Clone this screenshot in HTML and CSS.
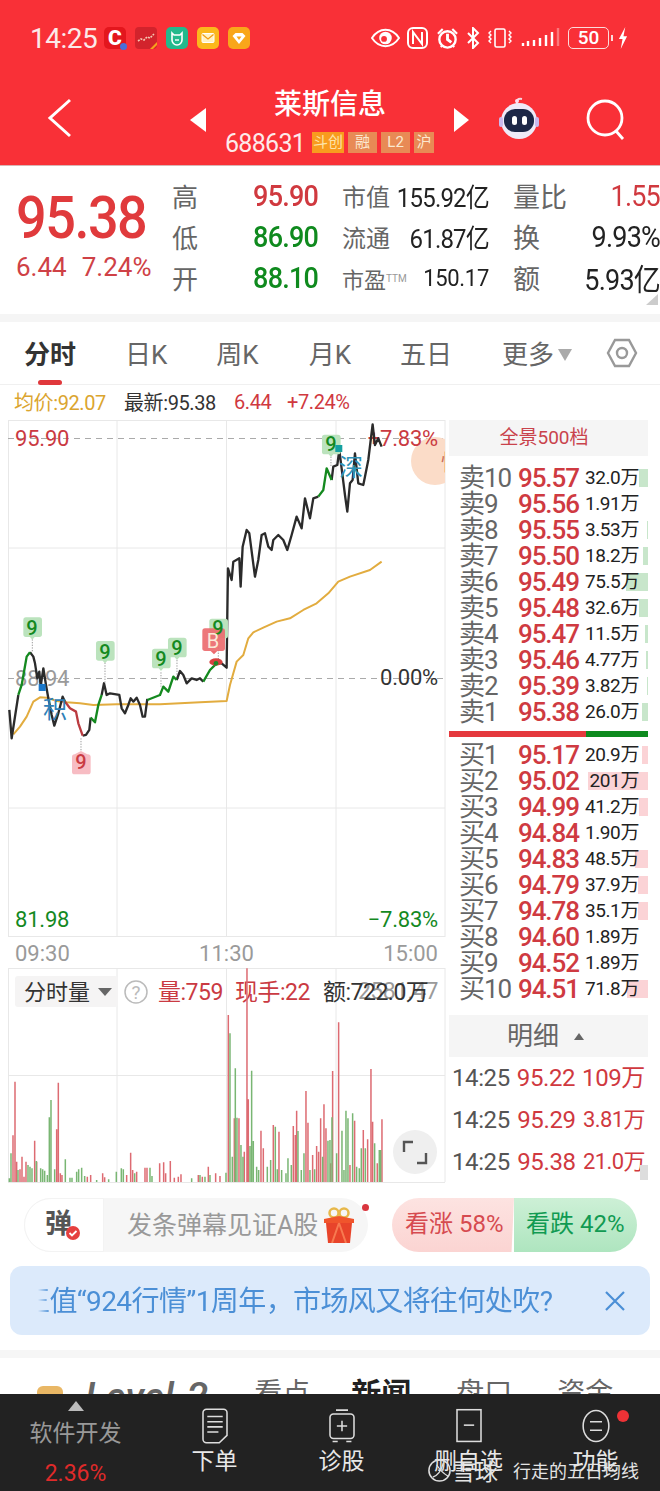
FILE: index.html
```html
<!DOCTYPE html>
<html lang="zh-CN">
<head>
    <meta charset="UTF-8">
    <meta name="viewport" content="width=device-width, initial-scale=1.0">
    <title>莱斯信息 688631</title>
    <link rel="stylesheet" href="styles.css">
</head>
<body>
<div class="page">

    <!-- red header -->
    <header class="top">
        <div class="status-bar">
            <span class="clock">14:25</span>
            <div class="app-icons">
                <span class="app app-c">C</span>
                <svg class="app" viewBox="0 0 22 22"><rect width="22" height="22" rx="4" fill="#d2232c"/><path d="M3 14l3-2 3 1 3-3 3 1 4-4" fill="none" stroke="#f6c6b0" stroke-width="1.6" stroke-dasharray="2 1"/><path d="M15 22l7-7v3l-4 4z" fill="#f7a21c"/></svg>
                <svg class="app" viewBox="0 0 22 22"><rect width="22" height="22" rx="5" fill="#23b98c"/><path d="M6 6l2 2h6l2-2v7a5 5 0 0 1-10 0z" fill="none" stroke="#fff" stroke-width="1.6"/><path d="M9 13h4" stroke="#fff" stroke-width="1.4"/></svg>
                <svg class="app" viewBox="0 0 22 22"><rect width="22" height="22" rx="5" fill="#fbb81c"/><rect x="5" y="6.500" width="12" height="9" rx="1" fill="#fff3c4" stroke="#fff" stroke-width="1"/><path d="M5.500 7.500L11 12l5.500-4.500" fill="none" stroke="#f39b12" stroke-width="1.200"/></svg>
                <svg class="app" viewBox="0 0 22 22"><rect width="22" height="22" rx="5" fill="#f9a61a"/><path d="M4.500 9l3-3h7l3 3-6.500 8z" fill="#fff"/><path d="M8.500 9.500h5L11 13z" fill="#f9a61a"/></svg>
            </div>
            <div class="sys-icons">
                <svg class="eye" viewBox="0 0 30 20"><path d="M1 10c4-6 8-8.500 14-8.500S25 4 29 10c-4 6-8 8.500-14 8.500S5 16 1 10z" fill="none" stroke="#fff" stroke-width="2"/><circle cx="15" cy="10" r="6.500" fill="#fff"/><circle cx="13.500" cy="11" r="3" fill="#f93037"/></svg>
                <svg class="nfc" viewBox="0 0 21 22"><rect x="1" y="1" width="19" height="20" rx="5" fill="none" stroke="#fff" stroke-width="2"/><path d="M6 17V5l9 12V5" fill="none" stroke="#fff" stroke-width="2"/></svg>
                <svg class="alarm" viewBox="0 0 24 24"><circle cx="12" cy="13" r="8.500" fill="none" stroke="#fff" stroke-width="2.500"/><path d="M12 7v6l4 3" fill="none" stroke="#fff" stroke-width="3"/><path d="M2 7l5-5M22 7l-5-5M5 21l2-2M19 21l-2-2" stroke="#fff" stroke-width="2.200"/></svg>
                <svg class="bt" viewBox="0 0 14 22"><path d="M2 6l10 10-5 5V1l5 5L2 16" fill="none" stroke="#fff" stroke-width="2"/></svg>
                <svg class="vibe" viewBox="0 0 26 20"><rect x="8" y="1" width="10" height="18" rx="1.500" fill="none" stroke="#fff" stroke-width="1.600"/><path d="M4 3l-2 2 2 2-2 2 2 2-2 2 2 2M22 3l2 2-2 2 2 2-2 2 2 2-2 2" fill="none" stroke="#fff" stroke-width="1.400"/></svg>
                <svg class="signal" viewBox="0 0 40 22"><path d="M2 16v3M7 14v5M13 13v6M19 11v8M25 8v11M31 5v14" stroke="#fff" stroke-width="2.400"/><path d="M37 1v18" stroke="#fff" stroke-opacity=".35" stroke-width="2.400"/></svg>
                <span class="battery">50</span>
                <span class="battery-tip"></span>
                <svg class="bolt" viewBox="0 0 11 24"><path d="M8 0L1 13h4l-2 11 7-14H6z" fill="#fff"/></svg>
            </div>
        </div>
        <div class="nav-bar">
            <svg class="back" viewBox="0 0 26 40"><path d="M23 2L3 20l20 18" fill="none" stroke="#fff" stroke-width="3"/></svg>
            <span class="arrow-left"></span>
            <div class="stock-title">
                <div class="stock-name">莱斯信息</div>
                <div class="stock-code">688631
                    <span class="mark mark-orange">斗创</span><span class="mark mark-wide">融</span><span class="mark mark-wide">L2</span><span class="mark">沪</span>
                </div>
            </div>
            <span class="arrow-right"></span>
            <svg class="robot" viewBox="0 0 46 44"><path d="M21 8c-1-4 1-6 5-5" fill="none" stroke="#f5d8e0" stroke-width="2"/><circle cx="21" cy="5" r="2" fill="#fde"/><circle cx="23" cy="25" r="18" fill="#efeaf8"/><rect x="3" y="21" width="4" height="10" rx="2" fill="#c9b9ee"/><rect x="39" y="21" width="4" height="10" rx="2" fill="#c9b9ee"/><rect x="8" y="13" width="30" height="23" rx="11" fill="#1c2747"/><rect x="16" y="20" width="5" height="9" rx="2.500" fill="#fff"/><rect x="26" y="20" width="5" height="9" rx="2.500" fill="#fff"/></svg>
            <svg class="search" viewBox="0 0 40 42"><circle cx="19" cy="19" r="17" fill="none" stroke="#fff" stroke-width="2.800"/><path d="M30 32l7 8" stroke="#fff" stroke-width="2.800"/></svg>
        </div>
    </header>

    <!-- quote summary -->
    <section class="quote">
        <div class="price-box">
            <div class="price-now">95.38</div>
            <div class="price-change"><span>6.44</span><span>7.24%</span></div>
        </div>
        <div class="stats">
            <div class="stat"><span class="lbl">高</span><b class="up">95.90</b></div>
            <div class="stat stat-mid"><span class="lbl">市值</span><b>155.92亿</b></div>
            <div class="stat stat-end"><span class="lbl">量比</span><b class="up">1.55</b></div>
            <div class="stat"><span class="lbl">低</span><b class="down">86.90</b></div>
            <div class="stat stat-mid"><span class="lbl">流通</span><b>61.87亿</b></div>
            <div class="stat stat-end"><span class="lbl">换</span><b>9.93%</b></div>
            <div class="stat"><span class="lbl">开</span><b class="down">88.10</b></div>
            <div class="stat stat-mid"><span class="lbl lbl-small">市盈<sup>TTM</sup></span><b class="val-small">150.17</b></div>
            <div class="stat stat-end"><span class="lbl">额</span><b>5.93亿</b></div>
        </div>
        <span class="corner"></span>
    </section>

    <!-- period tabs -->
    <nav class="tabs">
        <span class="tab tab-active">分时</span>
        <span class="tab tab-day">日K</span>
        <span class="tab tab-week">周K</span>
        <span class="tab tab-month">月K</span>
        <span class="tab tab-five">五日</span>
        <span class="tab tab-more">更多<i class="caret"></i></span>
        <svg class="hex" viewBox="0 0 32 30"><path d="M9 2h14l7 13-7 13H9L2 15z" fill="none" stroke="#999" stroke-width="2.400"/><circle cx="16" cy="15" r="5" fill="none" stroke="#999" stroke-width="2.400"/></svg>
    </nav>

    <div class="legend">
        <span class="gold">均价:92.07</span>
        <span class="now">最新:95.38</span>
        <span class="up">6.44</span>
        <span class="up">+7.24%</span>
    </div>

    <main class="board">
        <div class="charts">
            <svg class="price-chart" viewBox="0 418 449 520">
                <defs><clipPath id="plot"><rect x="8" y="418" width="437" height="520"/></clipPath></defs>
                <g stroke="#e8e8e8" stroke-width="1">
                    <path d="M8.500 420V937M117 420V937M226.500 420V937M336 420V937M445 420V937"/>
                    <path d="M8 420.500H445M8 548H445M8 808H445M8 936.500H445"/>
                </g>
                <path d="M8 438.500H445M8 678.500H445" stroke="#aaa" stroke-width="1" stroke-dasharray="6 5"/>
                <g clip-path="url(#plot)">
                    <circle cx="435" cy="461" r="24" fill="#fbdcc8"/>
                    <text class="t-peach" x="441" y="470">忙</text>
                </g>
                <text class="t-side up-fill" x="15" y="446">95.90</text>
                <text class="t-side gray-fill" x="15" y="686">88.94</text>
                <text class="t-side dark-fill" x="438" y="685" text-anchor="end">0.00%</text>
                <text class="t-side up-fill" x="438" y="446" text-anchor="end">+7.83%</text>
                <text class="t-side down-fill" x="15" y="927">81.98</text>
                <text class="t-side down-fill" x="438" y="927" text-anchor="end">−7.83%</text>
                <g transform="translate(0 415) scale(.3333)">
                    <!-- average price -->
                    <path fill="none" stroke="#e2ac3f" stroke-width="6" stroke-linejoin="round" d="M40 958L60 935L80 905L100 860L120 847L140 848L170 858L200 862L240 865L280 870L350 868L480 868L600 862L680 858L690 810L710 740L730 720L745 670L760 652L790 638L830 620L870 610L910 585L950 565L985 535L1015 500L1050 485L1110 465L1145 440"/>
                    <!-- price line -->
                    <path fill="none" stroke="#2b2b2b" stroke-width="7" stroke-linejoin="round" d="M28 885L35 970L55 840M90 712L100 725L105 745L112 790L118 770L122 815L130 760L138 810L145 850L155 900L163 932L175 895L188 845L195 860M248 962L258 960L268 945L272 908M305 840L312 805L320 840L330 835L358 840L365 880L375 895L385 870L392 850L400 860L410 848L420 870L428 905L435 905L442 852M530 795L540 768L550 780L560 805L575 790L590 795L600 790L610 800M650 745L665 745L680 758L682 600L684 460L695 495L700 440L718 430L722 515L728 395L740 345L748 355L765 485L775 435L785 360L795 355L805 395L815 405L820 375L835 360L850 375L862 405L875 360L890 305L905 340L915 250L930 310L940 250L955 245M995 195L1000 155L1012 150L1018 105L1025 160L1035 240L1042 290L1050 205L1058 195L1065 115L1075 205L1090 210L1095 185L1105 135L1118 28L1125 90L1135 70L1145 95"/>
                    <path fill="none" stroke="#14891f" stroke-width="7" stroke-linejoin="round" d="M55 840L65 810L80 725L90 712M272 908L285 922L295 870L305 840M442 855L480 840L490 815L505 830L520 785L530 795M610 800L630 765L650 745M955 245L970 225L980 160L995 195"/>
                    <path fill="none" stroke="#bb3b40" stroke-width="7" stroke-linejoin="round" d="M195 860L210 880L228 890L235 925L248 962"/>
                    <!-- markers -->
                    <path d="M97 665V712M315 735V805M483 772V815M531 735V780M655 665V740M993 125V155M243 970V1010" stroke="#888" stroke-width="2.500" stroke-dasharray="4 4"/>
                    <g class="nine-green">
                        <path d="M78 607H118A8 8 0 0 1 126 615V658A8 8 0 0 1 118 666H104L97 674L90 666H78A8 8 0 0 1 70 658V615A8 8 0 0 1 78 607z"/>
                        <path d="M296 678H336A8 8 0 0 1 344 686V729A8 8 0 0 1 336 737H322L315 745L308 737H296A8 8 0 0 1 288 729V686A8 8 0 0 1 296 678z"/>
                        <path d="M464 701H504A8 8 0 0 1 512 709V752A8 8 0 0 1 504 760H490L483 768L476 760H464A8 8 0 0 1 456 752V709A8 8 0 0 1 464 701z"/>
                        <path d="M512 668H552A8 8 0 0 1 560 676V719A8 8 0 0 1 552 727H538L531 735L524 727H512A8 8 0 0 1 504 719V676A8 8 0 0 1 512 668z"/>
                        <path d="M636 611H676A8 8 0 0 1 684 619V662A8 8 0 0 1 676 670H662L655 678L648 670H636A8 8 0 0 1 628 662V619A8 8 0 0 1 636 611z"/>
                        <path d="M974 59H1014A8 8 0 0 1 1022 67V110A8 8 0 0 1 1014 118H1000L993 126L986 118H974A8 8 0 0 1 966 110V67A8 8 0 0 1 974 59z"/>
                    </g>
                    <path fill="#f7bcc3" d="M224 1018L243 1008L262 1018A8 8 0 0 1 272 1026V1070A8 8 0 0 1 264 1078H224A8 8 0 0 1 216 1070V1026A8 8 0 0 1 224 1018z"/>
                    <rect x="607" y="640" width="68" height="68" rx="8" fill="#ec6b6f" opacity=".92"/>
                    <path d="M632 708h20l-10 10z" fill="#ec6b6f"/>
                    <ellipse cx="648" cy="741" rx="20" ry="11" fill="#d8413f"/>
                    <circle cx="648" cy="745" r="7" fill="#1c8a28"/>
                    <rect x="116" y="807" width="21" height="21" fill="#1a77c9"/>
                    <rect x="1006" y="90" width="21" height="21" fill="#14a0a0"/>
                </g>
                <text class="t-nine down-fill" x="32" y="635" text-anchor="middle">9</text>
                <text class="t-nine down-fill" x="105" y="659" text-anchor="middle">9</text>
                <text class="t-nine down-fill" x="161" y="666" text-anchor="middle">9</text>
                <text class="t-nine down-fill" x="177" y="655" text-anchor="middle">9</text>
                <text class="t-nine down-fill" x="218" y="635" text-anchor="middle">9</text>
                <text class="t-nine down-fill" x="331" y="451" text-anchor="middle">9</text>
                <text class="t-nine up-fill" x="81" y="769" text-anchor="middle">9</text>
                <text class="t-b" x="213" y="648" text-anchor="middle">B</text>
                <text class="t-tag tag-blue" x="55" y="718" text-anchor="middle">积</text>
                <text class="t-tag tag-teal" x="351" y="476" text-anchor="middle">深</text>
            </svg>

            <div class="time-axis"><span>09:30</span><span>11:30</span><span>15:00</span></div>

            <svg class="volume-chart" viewBox="0 968 449 220">
                <g stroke="#e8e8e8" stroke-width="1">
                    <path d="M8.500 968V1182M117 968V1182M226.500 968V1182M336 968V1182M445 968V1182"/>
                    <path d="M8 968.500H445M8 1075.500H445M8 1182.500H445"/>
                </g>
                <rect x="15" y="976" width="103" height="31" rx="3" fill="#f5f4f4"/>
                <text class="t-vol dark-fill" x="24" y="1000">分时量</text>
                <path d="M98 988h14l-7 8z" fill="#666"/>
                <circle cx="136" cy="992" r="11" fill="none" stroke="#bbb" stroke-width="1.500"/>
                <text class="t-help" x="136" y="999" text-anchor="middle">?</text>
                <text class="t-num gray-fill" x="438" y="999" text-anchor="end">2581.47</text>
                <text class="t-num up-fill" x="158" y="1000">量:759</text>
                <text class="t-num up-fill" x="235" y="1000">现手:22</text>
                <text class="t-num dark-fill" x="323" y="1000">额:722.0万</text>
                <g transform="translate(0 900) scale(.3333)" stroke-width="4.500">
                    <path stroke="#dd6b72" d="M39 846V706M45 846V545M50 846V785M60 846V808M66 846V770M72 846V830M78 846V785M104 846V722M110 846V785M170 846V688M175 846V548M181 846V820M186 846V825M262 846V830M272 846V825M308 846V820M314 846V832M380 846V825M392 846V758M398 846V810M410 846V815M435 846V803M441 846V803M479 846V790M491 846V787M497 846V820M511 846V783M523 846V833M535 846V830M543 846V823M595 846V825M607 846V830M625 846V800M647 846V820M660 846V828M685 846V345M703 846V655M717 846V655M733 846V755M741 846V205M745 846V598M783 846V692M790 846V745M820 846V675M837 846V695M880 846V678M886 846V705M890 846V632M918 846V573M924 846V668M938 846V765M950 846V738M956 846V755M962 846V655M972 846V613M978 846V685M992 846V790M998 846V513M1016 846V367M1050 846V795M1064 846V662M1090 846V690M1103 846V718M1113 846V507M1118 846V665M1132 846V790M1146 846V658"/>
                    <path stroke="#79b673" d="M28 846V835M33 846V760M54 846V810M84 846V795M90 846V800M96 846V805M109 846V783M122 846V805M128 846V808M134 846V812M142 846V825M148 846V652M153 846V600M164 846V808M196 846V778M210 846V833M216 846V833M230 846V815M236 846V808M245 846V803M254 846V828M290 846V840M326 846V838M349 846V815M364 846V805M370 846V808M404 846V820M450 846V803M456 846V828M575 846V835M600 846V825M615 846V830M630 846V825M678 846V818M690 846V400M697 846V770M706 846V505M711 846V653M723 846V735M729 846V770M750 846V738M755 846V512M760 846V723M770 846V800M776 846V810M802 846V800M812 846V780M826 846V680M832 846V808M845 846V810M858 846V820M864 846V775M874 846V795M894 846V693M904 846V810M912 846V760M930 846V810M944 846V808M968 846V770M984 846V722M990 846V720M996 846V652M1010 846V760M1026 846V692M1032 846V810M1038 846V632M1044 846V655M1058 846V640M1070 846V800M1078 846V805M1084 846V745M1096 846V745M1124 846V730M1138 846V750M1142 846V750"/>
                </g>
                <circle cx="415" cy="1152" r="22" fill="#efefef"/>
                <path d="M404 1152v-10h9M426 1153v10h-9" fill="none" stroke="#555" stroke-width="2.400"/>
            </svg>
        </div>

        <aside class="book">
            <div class="book-head">全景500档</div>
            <div class="book-rows book-sell">
                <div class="row" style="--depth:9px"><span class="side">卖10</span><span class="px">95.57</span><span class="qty">32.0万</span></div>
                <div class="row"><span class="side">卖9</span><span class="px">95.56</span><span class="qty">1.91万</span></div>
                <div class="row" style="--depth:1px"><span class="side">卖8</span><span class="px">95.55</span><span class="qty">3.53万</span></div>
                <div class="row" style="--depth:5px"><span class="side">卖7</span><span class="px">95.50</span><span class="qty">18.2万</span></div>
                <div class="row" style="--depth:22px"><span class="side">卖6</span><span class="px">95.49</span><span class="qty">75.5万</span></div>
                <div class="row" style="--depth:9px"><span class="side">卖5</span><span class="px">95.48</span><span class="qty">32.6万</span></div>
                <div class="row" style="--depth:3px"><span class="side">卖4</span><span class="px">95.47</span><span class="qty">11.5万</span></div>
                <div class="row" style="--depth:2px"><span class="side">卖3</span><span class="px">95.46</span><span class="qty">4.77万</span></div>
                <div class="row" style="--depth:1px"><span class="side">卖2</span><span class="px">95.39</span><span class="qty">3.82万</span></div>
                <div class="row" style="--depth:6px"><span class="side">卖1</span><span class="px">95.38</span><span class="qty">26.0万</span></div>
            </div>
            <div class="ratio"><span class="ratio-buy"></span><span class="ratio-sell"></span></div>
            <div class="book-rows book-buy">
                <div class="row" style="--depth:6px"><span class="side">买1</span><span class="px">95.17</span><span class="qty">20.9万</span></div>
                <div class="row" style="--depth:60px"><span class="side">买2</span><span class="px">95.02</span><span class="qty">201万</span></div>
                <div class="row" style="--depth:9px"><span class="side">买3</span><span class="px">94.99</span><span class="qty">41.2万</span></div>
                <div class="row"><span class="side">买4</span><span class="px">94.84</span><span class="qty">1.90万</span></div>
                <div class="row" style="--depth:13px"><span class="side">买5</span><span class="px">94.83</span><span class="qty">48.5万</span></div>
                <div class="row" style="--depth:10px"><span class="side">买6</span><span class="px">94.79</span><span class="qty">37.9万</span></div>
                <div class="row" style="--depth:10px"><span class="side">买7</span><span class="px">94.78</span><span class="qty">35.1万</span></div>
                <div class="row"><span class="side">买8</span><span class="px">94.60</span><span class="qty">1.89万</span></div>
                <div class="row"><span class="side">买9</span><span class="px">94.52</span><span class="qty">1.89万</span></div>
                <div class="row" style="--depth:21px"><span class="side">买10</span><span class="px">94.51</span><span class="qty">71.8万</span></div>
            </div>
            <div class="detail-head">明细<i class="caret-up"></i></div>
            <div class="trade"><span>14:25</span><span class="up">95.22</span><span class="up">109万</span></div>
            <div class="trade"><span>14:25</span><span class="up">95.29</span><span class="up trade-small">3.81万</span></div>
            <div class="trade"><span>14:25</span><span class="up">95.38</span><span class="up trade-small">21.0万</span></div>
            <span class="book-thumb"></span>
        </aside>
    </main>

    <!-- comment box and vote -->
    <div class="action-row">
        <div class="danmu">
            <div class="danmu-icon">弹<svg viewBox="0 0 14 14"><circle cx="7" cy="7" r="7" fill="#e5403f"/><path d="M3.500 7l2.500 2.500 4.500-4.500" fill="none" stroke="#fff" stroke-width="1.800"/></svg></div>
            <div class="danmu-input">发条弹幕见证A股
                <svg class="gift" viewBox="0 0 32 36"><circle cx="11" cy="6" r="4.500" fill="none" stroke="#e7b84a" stroke-width="2.500"/><circle cx="21" cy="6" r="4.500" fill="none" stroke="#e7b84a" stroke-width="2.500"/><path d="M1 12l15-3 15 3v4H1z" fill="#f0552c"/><path d="M3 16h26l-2 20H5z" fill="#e8442a"/><path d="M16 16l-7 20M16 16l7 20" stroke="#f77a50" stroke-width="2"/></svg>
            </div>
            <span class="danmu-dot"></span>
        </div>
        <div class="vote">
            <span class="vote-up">看涨 58%</span>
            <span class="vote-down">看跌 42%</span>
        </div>
    </div>

    <div class="banner">
        <span class="banner-text">正值“924行情”1周年，市场风又将往何处吹?</span>
        <svg class="banner-close" viewBox="0 0 20 20"><path d="M1 1l18 18M19 1L1 19" stroke="#4b8fd6" stroke-width="2.200"/></svg>
    </div>

    <div class="gap"></div>

    <div class="sub-tabs">
        <svg class="lock" viewBox="0 0 26 22"><rect width="26" height="30" rx="6" fill="#e9b765"/><rect x="8" y="9" width="10" height="4" fill="#fff"/></svg>
        <span class="level">Level-2</span>
        <span class="st st-1">看点</span>
        <span class="st st-2">新闻</span>
        <span class="st st-3">盘口</span>
        <span class="st st-4">资金</span>
    </div>

    <!-- bottom toolbar -->
    <footer class="toolbar">
        <div class="sector">
            <i class="sector-caret"></i>
            <span>软件开发</span>
            <span class="sector-pct">2.36%</span>
        </div>
        <div class="tool">
            <svg viewBox="0 0 32 42"><path d="M6 1.500h20a4 4 0 0 1 4 4V32l-9 8.500H6a4 4 0 0 1-4-4v-31a4 4 0 0 1 4-4z" fill="none" stroke="#ddd" stroke-width="1.800"/><path d="M7 10h18M7 16h18M7 22h18M7 28h13" stroke="#ddd" stroke-width="1.800"/></svg>
            <span>下单</span>
        </div>
        <div class="tool">
            <svg viewBox="0 0 36 42"><path d="M11 2.500h14M4 31.500V11a4 4 0 0 1 4-4h20a4 4 0 0 1 4 4v20.500a4 4 0 0 1-4 4H8a4 4 0 0 1-4-4zM7 39h6M23 39h6" fill="none" stroke="#ddd" stroke-width="1.800"/><path d="M12 21h12M18 15v12" stroke="#ddd" stroke-width="1.800"/></svg>
            <span>诊股</span>
        </div>
        <div class="tool">
            <svg viewBox="0 0 32 42"><rect x="2" y="2" width="28" height="37" fill="none" stroke="#ddd" stroke-width="1.800"/><path d="M10 20h12" stroke="#ddd" stroke-width="1.800"/></svg>
            <span>删自选</span>
        </div>
        <div class="tool">
            <svg viewBox="0 0 34 42"><ellipse cx="17" cy="21" rx="15" ry="18" fill="none" stroke="#ddd" stroke-width="1.800"/><path d="M10 16h14M10 26h14" stroke="#ddd" stroke-width="1.800"/></svg>
            <span>功能</span>
        </div>
        <span class="tool-dot"></span>
        <div class="watermark">
            <svg viewBox="0 0 26 26"><circle cx="13" cy="13" r="11" fill="none" stroke="#ddd" stroke-width="1.600"/><path d="M6 20c5-2 9-7 11-15M10 7c3 5 7 9 12 12" fill="none" stroke="#ddd" stroke-width="1.400"/></svg>
            <span class="wm-name">雪球</span><span class="wm-user">行走的五日均线</span>
        </div>
    </footer>
</div>
</body>
</html>
```

FILE: styles.css
```css
* {
    box-sizing: border-box;
}

html,
body {
    margin: 0;
    padding: 0;
    background: #fff;
}

body {
    font-family: Roboto, "Noto Sans CJK SC", sans-serif;
    color: #333;
}

.page {
    position: relative;
    width: 660px;
    height: 1491px;
    overflow: hidden;
    background: #fff;
}

.up { color: #d0393f; }
.down { color: #0f8a1e; }
.gold { color: #dba52f; }

.up-fill { fill: #ca3a42; }
.down-fill { fill: #14891f; }
.gray-fill { fill: #9a9a9a; }
.dark-fill { fill: #333; }

/* header */
.top {
    height: 166px;
    background: #f93037;
    color: #fff;
    border-bottom: 1px solid #d9b4b4;
}

.status-bar {
    display: flex;
    align-items: center;
    height: 76px;
    padding-left: 30px;
}

.clock {
    width: 74px;
    font-size: 28px;
    letter-spacing: -.5px;
    color: #fbe9e9;
}

.app-icons {
    display: flex;
    gap: 9px;
}

.app {
    display: block;
    width: 22px;
    height: 22px;
}

.app-c {
    position: relative;
    border-radius: 5px;
    background: #e3161d;
    font-size: 21px;
    font-weight: 900;
    line-height: 22px;
    text-align: center;
}

.app-c::after {
    content: "";
    position: absolute;
    right: -1px;
    bottom: -1px;
    width: 7px;
    height: 7px;
    border-radius: 50%;
    background: #4a6fd8;
}

.sys-icons {
    display: flex;
    align-items: center;
    margin-left: 121px;
}

.eye { width: 29px; height: 20px; }
.nfc { width: 21px; height: 22px; margin-left: 7px; }
.alarm { width: 23px; height: 23px; margin-left: 8px; }
.bt { width: 14px; height: 22px; margin-left: 7px; }
.vibe { width: 26px; height: 20px; margin-left: 7px; }
.signal { width: 40px; height: 22px; margin-left: 8px; }

.battery {
    width: 41px;
    height: 22px;
    margin-left: 7px;
    border: 1.500px solid #fbdcdc;
    border-radius: 5px;
    font-size: 19px;
    font-weight: 500;
    line-height: 19px;
    text-align: center;
}

.battery-tip {
    width: 2px;
    height: 6px;
    margin-left: 2px;
    background: #fbdcdc;
}

.bolt { width: 10px; height: 22px; margin-left: 5px; }

.nav-bar {
    display: flex;
    align-items: flex-start;
    height: 89px;
}

.back {
    width: 26px;
    height: 40px;
    margin: 22px 0 0 47px;
}

.arrow-left,
.arrow-right {
    width: 0;
    height: 0;
    margin-top: 32px;
    border-top: 12px solid transparent;
    border-bottom: 12px solid transparent;
}

.arrow-left {
    margin-left: 117px;
    border-right: 16px solid #fff;
}

.arrow-right {
    border-left: 15px solid #fff;
}

.stock-title {
    width: 248px;
    text-align: center;
}

.stock-name {
    margin-top: 11px;
    font-size: 28px;
    font-weight: 500;
    line-height: 36px;
}

.stock-code {
    display: flex;
    align-items: center;
    gap: 4px;
    margin: 6px 0 0 19px;
    font-size: 25px;
    line-height: 30px;
    letter-spacing: -.7px;
    color: #fdeaea;
}

.mark {
    width: 20px;
    height: 21px;
    margin-top: -3px;
    background: #e88a55;
    color: #fbe8d0;
    font-size: 15px;
    line-height: 21px;
    letter-spacing: 0;
    text-align: center;
}

.mark-orange {
    width: 32px;
    margin-left: 3px;
    background: #f89b1e;
    color: #fde3a8;
}

.mark-wide {
    width: 29px;
}

.robot {
    width: 46px;
    height: 44px;
    margin: 20px 0 0 27px;
}

.search {
    width: 40px;
    height: 42px;
    margin: 23px 0 0 44px;
}

/* quote */
.quote {
    position: relative;
    display: flex;
    height: 156px;
    padding-top: 9px;
    border-bottom: 8px solid #f5f5f5;
    overflow: hidden;
}

.price-box {
    width: 172px;
    padding-left: 16px;
}

.price-now {
    margin-top: 13px;
    font-size: 54px;
    font-weight: 500;
    line-height: 60px;
    letter-spacing: -1.500px;
    color: #e03a3c;
    transform: scaleY(1.1);
}

.price-change {
    display: flex;
    gap: 15px;
    margin-top: 4px;
    font-size: 26px;
    line-height: 30px;
    color: #cf4146;
}

.stats {
    display: grid;
    grid-template-columns: 170px 171px 147px;
    grid-auto-rows: 41px;
}

.stat {
    display: flex;
    align-items: center;
    justify-content: space-between;
    padding-right: 24px;
}

.stat-end {
    padding-right: 0;
}

.lbl {
    font-size: 26px;
    color: #666;
    white-space: nowrap;
}

.stat b {
    font-size: 27px;
    font-weight: 500;
    letter-spacing: -.8px;
    white-space: nowrap;
    transform: scaleY(1.1);
}

.stat-mid b {
    font-size: 24px;
    font-weight: 400;
    color: #222;
}

.stat-mid .lbl {
    font-size: 24px;
}

.stat-end b {
    font-weight: 400;
}

.stat-end b:not(.up) {
    color: #222;
}

.stat-end .lbl {
    font-size: 27px;
}

.stat-mid .lbl-small {
    font-size: 22px;
}

.lbl sup {
    font-size: 10px;
    color: #999;
    vertical-align: 6px;
    line-height: 0;
}

.stat-mid .val-small {
    font-size: 22px;
    letter-spacing: -.3px;
}

.corner {
    position: absolute;
    right: 2px;
    bottom: 9px;
    border-left: 12px solid transparent;
    border-bottom: 11px solid #ccc;
}

/* tabs */
.tabs {
    position: relative;
    display: flex;
    align-items: center;
    height: 63px;
    padding-bottom: 1px;
    border-bottom: 1px solid #f0f0f0;
}

.tab {
    font-size: 26px;
    color: #666;
    white-space: nowrap;
}

.tab-active {
    position: relative;
    margin-left: 24px;
    font-weight: 700;
    color: #333;
}

.tab-active::after {
    content: "";
    position: absolute;
    left: 14px;
    bottom: -14px;
    width: 24px;
    height: 5px;
    border-radius: 3px;
    background: #e0383c;
}

.tab-day { margin-left: 49px; }
.tab-week { margin-left: 49px; }
.tab-month { margin-left: 50px; }
.tab-five { margin-left: 49px; }
.tab-more { margin-left: 50px; }

.caret {
    display: inline-block;
    margin-left: 4px;
    border-left: 7px solid transparent;
    border-right: 7px solid transparent;
    border-top: 12px solid #aaa;
    vertical-align: 3px;
}

.hex {
    width: 32px;
    height: 30px;
    margin-left: 34px;
}

.legend {
    display: flex;
    align-items: center;
    height: 33px;
    padding-left: 14px;
    font-size: 20px;
    letter-spacing: -.4px;
}

.legend .gold { width: 110px; }
.legend .now { width: 110px; color: #333; }
.legend .up:nth-child(3) { width: 53px; }

/* chart + order book */
.board {
    display: flex;
    height: 780px;
}

.charts {
    width: 449px;
}

.price-chart,
.volume-chart {
    display: block;
    width: 449px;
}

.price-chart { height: 520px; }
.volume-chart { height: 220px; }

.t-side {
    font-size: 22px;
    letter-spacing: -.2px;
}

.t-nine {
    font-size: 20px;
    font-weight: 500;
}

.t-b {
    font-size: 20px;
    fill: #fbe9d8;
}

.t-tag {
    font-size: 24px;
}

.tag-blue { fill: #2f7fb8; }
.tag-teal { fill: #2f93b8; }
.t-peach { font-size: 22px; fill: #c96b55; }
.nine-green { fill: #bbe3bd; }

.t-vol { font-size: 22px; }
.t-help { font-size: 19px; fill: #bbb; }
.t-num { font-size: 23px; letter-spacing: -.5px; }

.time-axis {
    display: flex;
    justify-content: space-between;
    align-items: center;
    height: 30px;
    padding: 0 11px 0 15px;
    font-size: 22px;
    color: #9a9a9a;
}

.book {
    position: relative;
    width: 199px;
    padding-top: 2px;
}

.book-head {
    height: 36px;
    padding-right: 9px;
    background: #f5f5f5;
    color: #c9434c;
    font-size: 19px;
    line-height: 36px;
    text-align: center;
}

.book-rows {
    padding-top: 9px;
}

.row {
    display: grid;
    grid-template-columns: 59px 66px 55px;
    height: 26px;
    padding-left: 10px;
    line-height: 26px;
    background-repeat: no-repeat;
    background-position: right center;
    background-size: var(--depth, 0) 18px;
}

.book-sell .row {
    background-image: linear-gradient(#c8e6cb, #c8e6cb);
}

.book-buy .row {
    background-image: linear-gradient(#fbd3d6, #fbd3d6);
}

.side {
    font-size: 26px;
    color: #666;
    letter-spacing: -1px;
    white-space: nowrap;
}

.px {
    font-size: 26px;
    font-weight: 500;
    color: #cf3a41;
    letter-spacing: -1.100px;
}

.qty {
    font-size: 19px;
    color: #222;
    text-align: right;
    letter-spacing: -.4px;
    white-space: nowrap;
}

.ratio {
    display: flex;
    height: 6px;
    margin-top: 6px;
}

.ratio-buy { width: 137px; background: #e5393d; }
.ratio-sell { flex: 1; background: #0d8a1e; }

.book-buy {
    padding-top: 5px;
}

.detail-head {
    height: 42px;
    margin-top: 13px;
    padding-left: 58px;
    background: #f5f5f5;
    color: #666;
    font-size: 26px;
    line-height: 42px;
}

.caret-up {
    display: inline-block;
    margin-left: 15px;
    border-left: 5px solid transparent;
    border-right: 5px solid transparent;
    border-bottom: 7px solid #666;
    vertical-align: 5px;
}

.trade {
    display: flex;
    justify-content: space-between;
    height: 42px;
    padding: 0 3px 0 3px;
    font-size: 24px;
    line-height: 42px;
    letter-spacing: -.4px;
    color: #555;
    white-space: nowrap;
}

.trade-small {
    font-size: 22px;
    letter-spacing: -.6px;
}

.book-thumb {
    position: absolute;
    top: 747px;
    right: 0;
    width: 8px;
    height: 15px;
    background: #ddd;
}

/* comment row */
.action-row {
    display: flex;
    padding-left: 24px;
}

.danmu {
    position: relative;
    display: flex;
    width: 344px;
    height: 54px;
    border-radius: 27px;
    background: #f6f6f6;
}

.danmu-icon {
    position: relative;
    width: 80px;
    padding-left: 20px;
    border: 1px solid #f3f3f3;
    border-radius: 27px 0 0 27px;
    background: #fff;
    font-size: 27px;
    font-weight: 700;
    line-height: 50px;
    color: #555;
}

.danmu-icon svg {
    position: absolute;
    left: 41px;
    top: 27px;
    width: 14px;
    height: 14px;
}

.danmu-input {
    display: flex;
    align-items: center;
    padding: 0 0 4px 23px;
    font-size: 25px;
    color: #999;
}

.gift {
    width: 32px;
    height: 36px;
    margin: 4px 0 0 5px;
}

.danmu-dot {
    position: absolute;
    top: 6px;
    right: -1px;
    width: 7px;
    height: 7px;
    border-radius: 50%;
    background: #d9363e;
}

.vote {
    display: flex;
    width: 245px;
    height: 54px;
    margin-left: 24px;
    border-radius: 27px;
    overflow: hidden;
    font-size: 24px;
    line-height: 52px;
}

.vote-up {
    width: 122px;
    padding-left: 13px;
    background: linear-gradient(#fde3e1, #fbd4d2);
    color: #d64a4f;
    clip-path: polygon(0 0, 100% 0, 98% 100%, 0 100%);
    white-space: nowrap;
}

.vote-down {
    flex: 1;
    padding-left: 12px;
    background: linear-gradient(#cdf0d6, #aee5bf);
    color: #119a52;
    white-space: nowrap;
}

.banner {
    display: flex;
    align-items: center;
    height: 69px;
    margin: 14px 10px 0;
    padding: 0 25px 0 28px;
    border-radius: 12px;
    background: #dceafb;
}

.banner-text {
    flex: 1;
    margin: 0 14px 3px 0;
    overflow: hidden;
    font-size: 28px;
    text-indent: -16px;
    color: #4b8fd6;
    white-space: nowrap;
    letter-spacing: -.6px;
    -webkit-mask-image: linear-gradient(90deg, transparent, #000 12px);
    mask-image: linear-gradient(90deg, transparent, #000 12px);
}

.banner-close {
    width: 20px;
    height: 20px;
}

.gap {
    height: 8px;
    margin-top: 15px;
    background: #f6f6f6;
}

.sub-tabs {
    display: flex;
    align-items: flex-start;
    height: 36px;
    overflow: hidden;
    font-size: 28px;
    line-height: 72px;
}

.lock {
    width: 26px;
    height: 22px;
    margin: 28px 0 0 37px;
}

.level {
    margin: 3px 0 0 22px;
    font-size: 39px;
    font-style: italic;
    font-weight: 500;
    color: #666;
}

.st {
    color: #666;
}

.st-1 { margin-left: 46px; }
.st-2 { margin-left: 41px; font-size: 30px; font-weight: 700; color: #222; }
.st-3 { margin-left: 45px; }
.st-4 { margin-left: 45px; }

/* bottom bar */
.toolbar {
    position: relative;
    display: flex;
    height: 97px;
    background: #222;
    color: #e8e8e8;
}

.sector {
    display: flex;
    flex-direction: column;
    align-items: center;
    width: 151px;
    color: #999;
    font-size: 23px;
}

.sector-caret {
    margin-top: 7px;
    border-left: 8px solid transparent;
    border-right: 8px solid transparent;
    border-bottom: 10px solid #bbb;
}

.sector span {
    margin-top: 8px;
    line-height: 30px;
}

.sector .sector-pct {
    margin-top: 10px;
    color: #df2a2a;
}

.tool {
    display: flex;
    flex-direction: column;
    align-items: center;
    width: 127px;
    padding-top: 14px;
    font-size: 23px;
}

.tool svg {
    width: 36px;
    height: 36px;
}

.tool span {
    margin-top: 3px;
    line-height: 30px;
    white-space: nowrap;
}

.tool-dot {
    position: absolute;
    top: 16px;
    left: 617px;
    width: 12px;
    height: 12px;
    border-radius: 50%;
    background: #ee3236;
}

.watermark {
    position: absolute;
    top: 59px;
    left: 427px;
    display: flex;
    align-items: center;
    color: #e4e4e4;
    white-space: nowrap;
}

.watermark svg {
    width: 25px;
    height: 25px;
}

.wm-name {
    font-size: 23px;
}

.wm-user {
    margin-left: 15px;
    font-size: 18px;
}
```
